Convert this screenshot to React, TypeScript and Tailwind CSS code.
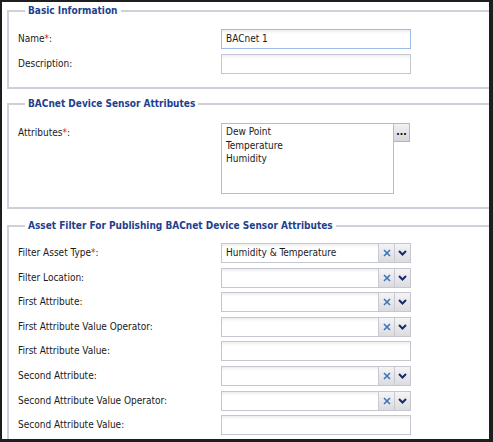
import React from "react";

const FONT = { fontFamily: '"DejaVu Sans Condensed", "DejaVu Sans", sans-serif' };

function Req() {
  return <span className="text-[#e02424]">*</span>;
}

function Label({ children }: { children: React.ReactNode }) {
  return (
    <div className="w-[203px] shrink-0 text-[10px] leading-[20px] text-[#1a1a1a]" style={FONT}>
      {children}
    </div>
  );
}

function TextBox({ value, focus }: { value?: string; focus?: boolean }) {
  return (
    <div
      className={`w-[190px] h-[20px] bg-white border ${focus ? "border-[#9cbde6]" : "border-[#c4c6d2]"} shadow-[inset_0_3px_3px_-1px_rgba(0,0,0,0.07)] px-[4px] text-[10px] leading-[18px] text-[#1a1a1a]`}
      style={FONT}
    >
      {value}
    </div>
  );
}

function Combo({ value }: { value?: string }) {
  return (
    <div className="w-[190px] h-[20px] flex bg-white border border-[#c4c6d2] shadow-[inset_0_3px_3px_-1px_rgba(0,0,0,0.07)]">
      <div className="flex-1 px-[4px] text-[10px] leading-[18px] text-[#1a1a1a]" style={FONT}>
        {value}
      </div>
      <div className="w-[16px] h-full border-l border-[#c8c9d3] bg-gradient-to-b from-[#f4f4f6] to-[#dcdce0] flex items-center justify-center">
        <svg width="8" height="8" viewBox="0 0 8 8">
          <path d="M1 1 L7 7 M7 1 L1 7" stroke="#3a75c0" strokeWidth="1.6" />
        </svg>
      </div>
      <div className="w-[16px] h-full border-l border-[#c8c9d3] bg-gradient-to-b from-[#f4f4f6] to-[#dcdce0] flex items-center justify-center">
        <svg width="9" height="6" viewBox="0 0 9 6">
          <path d="M1 1 L4.5 4.5 L8 1" stroke="#1b2a66" strokeWidth="2" fill="none" />
        </svg>
      </div>
    </div>
  );
}

function Row({ label, children }: { label: React.ReactNode; children: React.ReactNode }) {
  return (
    <div className="flex items-start">
      <Label>{label}</Label>
      {children}
    </div>
  );
}

function Fieldset({
  title,
  className,
  children,
}: {
  title: string;
  className?: string;
  children: React.ReactNode;
}) {
  return (
    <fieldset className={`w-[492px] border-2 border-[#cfd0da] ml-[5px] pl-[9px] ${className ?? ""}`}>
      <legend
        className="ml-[7px] px-[3px] text-[10px] leading-[14px] font-bold text-[#1d3f8e]"
        style={FONT}
      >
        {title}
      </legend>
      {children}
    </fieldset>
  );
}

export default function App() {
  return (
    <div className="w-[493px] h-[442px] bg-[#1e1e1e] pt-[2px] pl-[2px] pr-[4px] pb-[3px]">
      <div className="w-full h-full bg-white overflow-hidden pt-[2px]">
        <Fieldset title="Basic Information" className="pt-[11px] pb-[13px]">
          <div className="flex flex-col gap-[5px]">
            <Row label={<>Name<Req />:</>}>
              <TextBox value="BACnet 1" focus />
            </Row>
            <Row label="Description:">
              <TextBox />
            </Row>
          </div>
        </Fieldset>

        <Fieldset title="BACnet Device Sensor Attributes" className="mt-[8px] pt-[12px] pb-[13px]">
          <Row label={<>Attributes<Req />:</>}>
            <div className="flex items-start">
              <div
                className="w-[173px] h-[71px] bg-white border border-[#b9bbc7] px-[4px] pt-[1px] text-[10px] leading-[13.5px] text-[#1a1a1a]"
                style={FONT}
              >
                <div>Dew Point</div>
                <div>Temperature</div>
                <div>Humidity</div>
              </div>
              <div className="w-[16px] h-[19px] border border-l-0 border-[#b3b5c0] bg-gradient-to-b from-[#f2f2f4] to-[#d6d6da] flex items-center justify-center">
                <span className="text-[10px] leading-none font-bold text-black -mt-[2px]" style={FONT}>...</span>
              </div>
            </div>
          </Row>
        </Fieldset>

        <Fieldset
          title="Asset Filter For Publishing BACnet Device Sensor Attributes"
          className="mt-[10px] pt-[10px] pb-[20px]"
        >
          <div className="flex flex-col gap-[4.6px]">
            <Row label={<>Filter Asset Type<Req />:</>}>
              <Combo value="Humidity & Temperature" />
            </Row>
            <Row label="Filter Location:">
              <Combo />
            </Row>
            <Row label="First Attribute:">
              <Combo />
            </Row>
            <Row label="First Attribute Value Operator:">
              <Combo />
            </Row>
            <Row label="First Attribute Value:">
              <TextBox />
            </Row>
            <Row label="Second Attribute:">
              <Combo />
            </Row>
            <Row label="Second Attribute Value Operator:">
              <Combo />
            </Row>
            <Row label="Second Attribute Value:">
              <TextBox />
            </Row>
          </div>
        </Fieldset>
      </div>
    </div>
  );
}
